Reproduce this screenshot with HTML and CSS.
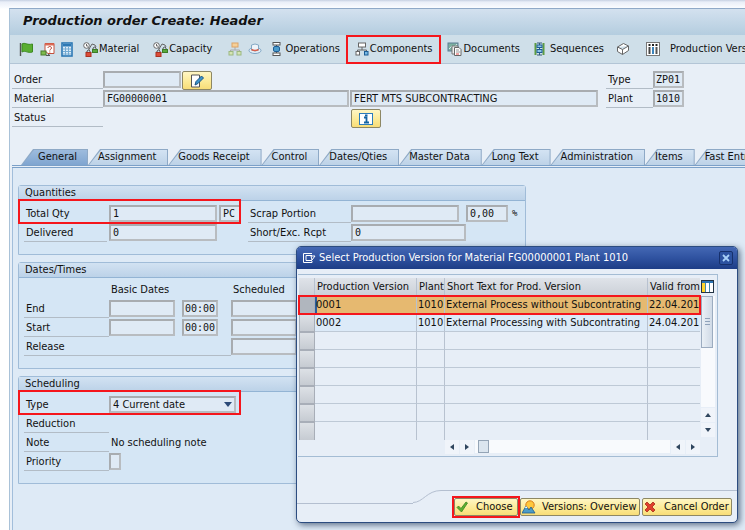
FILE: index.html
```html
<!DOCTYPE html>
<html lang="en">
<head>
    <meta charset="UTF-8">
    <title>Production order Create: Header</title>
    <link rel="stylesheet" href="styles.css">
</head>
<body>
<div class="window">
    <h1 class="title-bar">Production order Create: Header</h1>

    <div class="toolbar">
        <button class="tool" aria-label="Release order">
            <svg width="15" height="15" viewBox="0 0 15 15"><path d="M1.5 1v13" stroke="#555" stroke-width="1.4"/><path d="M3 2c3-2 5 1.500 10.500 0v8c-5 1.500-7-2-10.500 0z" fill="#5aae32" stroke="#3c8a20"/></svg>
        </button>
        <button class="tool" aria-label="Check material">
            <svg width="15" height="15" viewBox="0 0 15 15"><path d="M5 1.500h9v10H8L5 9z" fill="#fff" stroke="#c4503c"/><path d="M5 1.500h9v2H5z" fill="#dd6a55"/><path d="M8 6c0-2 3.500-2 3.500 0 0 1.200-1.700 1.200-1.700 2.500M9.800 9.500v1" fill="none" stroke="#b43a2a"/><rect x="1" y="9" width="5" height="4" fill="#7cba4c" stroke="#4a7a2c"/><path d="M6 13.500h4l-2-1.500" fill="none" stroke="#555"/></svg>
        </button>
        <button class="tool costs" aria-label="Costs">
            <svg width="12" height="15" viewBox="0 0 12 15"><rect x="1" y="1" width="10" height="13" fill="#dcecf8" stroke="#2c78b4" stroke-width="1.600"/><rect x="2" y="2" width="8" height="2.500" fill="#2c78b4"/><path d="M2 7h8M2 9.500h8M2 12h8M4.500 5v8M7.500 5v8" stroke="#74aad2"/></svg>
        </button>
        <button class="tool wide">
            <svg width="15" height="15" viewBox="0 0 15 15"><circle cx="3.500" cy="3.500" r="2.800" fill="#fff" stroke="#666"/><path d="M3.500 2v2H5M6 7l3-5 3 1 1 2M6 6v2" fill="none" stroke="#666"/><path d="M10 7V6q2-2 3 0v1" fill="none" stroke="#555"/><rect x="9.500" y="7.500" width="5" height="3" fill="#59a83c" stroke="#3c7c28"/><path d="M4 10V9q2-2 3 0v1" fill="none" stroke="#555"/><rect x="3" y="10.500" width="5" height="4" fill="#dc4c38" stroke="#ac3020"/></svg>
            Material
        </button>
        <button class="tool">
            <svg width="15" height="15" viewBox="0 0 15 15"><circle cx="3.500" cy="3.500" r="2.800" fill="#fff" stroke="#666"/><path d="M3.500 2v2H5M6 7l3-5 3 1 1 2M6 6v2" fill="none" stroke="#666"/><path d="M10 7V6q2-2 3 0v1" fill="none" stroke="#555"/><rect x="9.500" y="7.500" width="5" height="3" fill="#59a83c" stroke="#3c7c28"/><path d="M4 10V9q2-2 3 0v1" fill="none" stroke="#555"/><rect x="3" y="10.500" width="5" height="4" fill="#dc4c38" stroke="#ac3020"/></svg>
            Capacity
        </button>
        <span class="divider"></span>
        <button class="tool" aria-label="Hierarchy">
            <svg width="14" height="14" viewBox="0 0 14 14"><path d="M7 5v3M2.500 10V8h9v2" fill="none" stroke="#aaa"/><rect x="4" y="1" width="6" height="4" fill="#f6d098" stroke="#dca468"/><rect x="1" y="9.500" width="4" height="3.500" fill="#d4e4b4" stroke="#9cb880"/><rect x="9" y="9.500" width="4" height="3.500" fill="#d4e4b4" stroke="#9cb880"/></svg>
        </button>
        <button class="tool" aria-label="Header">
            <svg width="14" height="14" viewBox="0 0 14 14"><ellipse cx="7" cy="8.500" rx="6" ry="3" fill="#e4eef6" stroke="#7ca4c4"/><path d="M3.500 8V3q3.500-2 7 0v5q-3.500 2-7 0z" fill="#eef4fa" stroke="#84a8c4"/><path d="M3.500 7.500q3.500 2 7 0" fill="none" stroke="#d8604c" stroke-width="1.500"/></svg>
        </button>
        <button class="tool operations">
            <svg width="9" height="14" viewBox="0 0 9 14"><rect x="1" y=".5" width="7" height="2.500" fill="#fff" stroke="#555"/><rect x="1" y="11" width="7" height="2.500" fill="#fff" stroke="#555"/><path d="M4.500 3v8" stroke="#555"/><rect x="1.500" y="4.500" width="6" height="5" rx="1.500" fill="#4c9ccc" stroke="#1c5c94"/></svg>
            Operations
        </button>
        <button class="tool components marked">
            <svg width="14" height="14" viewBox="0 0 14 14"><path d="M7 5v3M2.500 10V8h9v2" fill="none" stroke="#666"/><rect x="3.500" y="1" width="7" height="4" fill="#fff" stroke="#666"/><rect x="1" y="9.500" width="3.500" height="3.500" fill="#fff" stroke="#666"/><rect x="9.500" y="9.500" width="3.500" height="3.500" fill="#78b8e4" stroke="#1c5c94"/></svg>
            Components
        </button>
        <button class="tool documents">
            <svg width="15" height="14" viewBox="0 0 15 14"><rect x="1" y="1" width="10" height="8" fill="#7cb0a0" stroke="#5c7c94"/><path d="M2 7l3-3 2 2 3-4" fill="none" stroke="#d8ecf0"/><path d="M5 4h6v8H5z" fill="#eee" stroke="#777"/><path d="M7.500 5.500H12l2 2v6H7.500z" fill="#fff" stroke="#666"/><path d="M9 8h3M9 10h4" stroke="#999"/><path d="M9 12h3" stroke="#d44"/></svg>
            Documents
        </button>
        <button class="tool sequences">
            <svg width="11" height="14" viewBox="0 0 11 14"><path d="M1.500 1v12M9.500 1v12" stroke="#5c9c44" stroke-width="2"/><path d="M3 1h5M3 13h5M5.500 1v12" stroke="#355a7a"/><rect x="3" y="3" width="5" height="2.500" fill="#8cc4e8" stroke="#1c5c94"/><rect x="3" y="7.500" width="5" height="3" fill="#8cc4e8" stroke="#1c5c94"/></svg>
            Sequences
        </button>
        <button class="tool" aria-label="Material component">
            <svg width="14" height="14" viewBox="0 0 14 14"><path d="M1.500 5l6-3.500L12.500 4v4.500l-6 4-5-3z M1.500 5l5 2.500 6-3.500M6.500 7.500v5" fill="#fff" stroke="#666" stroke-linejoin="round"/></svg>
        </button>
        <span class="divider"></span>
        <button class="tool versions">
            <svg width="14" height="14" viewBox="0 0 14 14"><rect x=".5" y=".5" width="13" height="13" fill="#fff" stroke="#777"/><path d="M3.500 2v2M7 2v2M10.500 2v2" stroke="#222" stroke-width="2"/><path d="M3.500 5v7" stroke="#444" stroke-width="2"/><path d="M7 5v7" stroke="#3c84bc" stroke-width="2"/><path d="M10.500 5v7" stroke="#555" stroke-width="2"/></svg>
            Production Version
        </button>
    </div>

    <form class="order-head">
        <div class="head-main">
            <div class="row">
                <label class="cap" for="order">Order</label>
                <input class="field order-no" id="order" type="text">
                <button class="yellow icon-only" type="button" aria-label="Edit order text">
                    <svg width="14" height="14" viewBox="0 0 14 14"><path d="M1.500 1h8v12h-8z" fill="#fff" stroke="#555"/><path d="M5 11l1-3.500L11.500 2l2 2L8 9.500z" fill="#3c94cc" stroke="#1c5484"/></svg>
                </button>
            </div>
            <div class="row">
                <label class="cap" for="material">Material</label>
                <input class="field material-no" id="material" type="text" value="FG00000001">
                <input class="field material-text" type="text" value="FERT MTS SUBCONTRACTING" aria-label="Material description">
            </div>
            <div class="row">
                <span class="cap">Status</span>
                <button class="yellow icon-only status-info" type="button" aria-label="Status information">
                    <svg width="14" height="12" viewBox="0 0 14 12"><rect x=".5" y=".5" width="13" height="11" fill="#fff" stroke="#2c7cbc"/><path d="M5 4.500h2.500V9M5 9.500h5" fill="none" stroke="#1464a4" stroke-width="1.800"/><rect x="6" y="1.500" width="2.500" height="2" fill="#1464a4"/></svg>
                </button>
            </div>
        </div>
        <div class="head-side">
            <div class="row">
                <label class="cap" for="orderType">Type</label>
                <input class="field" id="orderType" type="text" value="ZP01">
            </div>
            <div class="row">
                <label class="cap" for="plant">Plant</label>
                <input class="field" id="plant" type="text" value="1010">
            </div>
        </div>
    </form>

    <div class="tabs" role="tablist">
        <button class="tab active" role="tab">General</button>
        <button class="tab" role="tab">Assignment</button>
        <button class="tab" role="tab">Goods Receipt</button>
        <button class="tab" role="tab">Control</button>
        <button class="tab" role="tab">Dates/Qties</button>
        <button class="tab" role="tab">Master Data</button>
        <button class="tab" role="tab">Long Text</button>
        <button class="tab" role="tab">Administration</button>
        <button class="tab" role="tab">Items</button>
        <button class="tab" role="tab">Fast Entry</button>
    </div>

    <div class="panel">
        <section class="group">
            <h2>Quantities</h2>
            <div class="group-body">
                <div class="row">
                    <div class="pair marked mark-wide">
                        <label class="cap" for="totalQty">Total Qty</label>
                        <input class="field qty" id="totalQty" type="text" value="1">
                        <input class="field unit" type="text" value="PC" aria-label="Unit">
                    </div>
                    <label class="cap cap-second" for="scrap">Scrap Portion</label>
                    <input class="field qty" id="scrap" type="text">
                    <input class="field percent" type="text" value="0,00" aria-label="Scrap percent">
                    <span class="sign">%</span>
                </div>
                <div class="row">
                    <div class="pair">
                        <label class="cap" for="delivered">Delivered</label>
                        <input class="field qty" id="delivered" type="text" value="0">
                    </div>
                    <label class="cap cap-second" for="short">Short/Exc. Rcpt</label>
                    <input class="field short" id="short" type="text" value="0">
                </div>
            </div>
        </section>

        <section class="group">
            <h2>Dates/Times</h2>
            <div class="group-body dates">
                <span class="col-head basic">Basic Dates</span>
                <span class="col-head">Scheduled</span>
                <label class="cap" for="endDate">End</label>
                <input class="field" id="endDate" type="text">
                <input class="field time" type="text" value="00:00" aria-label="End time">
                <input class="field scheduled" type="text" aria-label="Scheduled end">
                <label class="cap" for="startDate">Start</label>
                <input class="field" id="startDate" type="text">
                <input class="field time" type="text" value="00:00" aria-label="Start time">
                <input class="field scheduled" type="text" aria-label="Scheduled start">
                <label class="cap release" for="releaseDate">Release</label>
                <input class="field scheduled" id="releaseDate" type="text">
            </div>
        </section>

        <section class="group">
            <h2>Scheduling</h2>
            <div class="group-body">
                <div class="row">
                    <div class="pair marked mark-wide">
                        <label class="cap" for="schedType">Type</label>
                        <span class="select-wrap">
                            <select class="field" id="schedType">
                                <option>4 Current date</option>
                            </select>
                        </span>
                    </div>
                </div>
                <div class="row"><span class="cap">Reduction</span></div>
                <div class="row"><span class="cap">Note</span><span class="note">No scheduling note</span></div>
                <div class="row">
                    <label class="cap" for="priority">Priority</label>
                    <input class="field priority" id="priority" type="text">
                </div>
            </div>
        </section>
    </div>
</div>

<div class="dialog" role="dialog" aria-labelledby="dialogTitle">
    <div class="dialog-title">
        <svg width="14" height="12" viewBox="0 0 14 12"><path d="M10 1.500H1.500v9H10V9M10 3.500H4v5h6M9 4h4L10 8z" fill="none" stroke="#fff"/></svg>
        <span id="dialogTitle">Select Production Version for Material FG00000001 Plant 1010</span>
        <button class="close" aria-label="Close">
            <svg width="8" height="8" viewBox="0 0 8 8"><path d="M1 1l6 6M7 1L1 7" stroke="#a8d0f8" stroke-width="1.800"/></svg>
        </button>
    </div>
    <div class="grid-box">
        <div class="grid-main">
            <table>
                <thead>
                    <tr><th class="sel"></th><th class="version">Production Version</th><th class="plant">Plant</th><th class="text">Short Text for Prod. Version</th><th>Valid from</th></tr>
                </thead>
                <tbody>
                    <tr class="picked"><td class="sel"></td><td class="cursor">0001</td><td>1010</td><td>External Process without Subcontrating</td><td>22.04.201</td></tr>
                    <tr class="filled"><td class="sel"></td><td>0002</td><td>1010</td><td>External Processing with Subcontrating</td><td>24.04.201</td></tr>
                    <tr><td class="sel"></td><td></td><td></td><td></td><td></td></tr>
                    <tr><td class="sel"></td><td></td><td></td><td></td><td></td></tr>
                    <tr><td class="sel"></td><td></td><td></td><td></td><td></td></tr>
                    <tr><td class="sel"></td><td></td><td></td><td></td><td></td></tr>
                    <tr><td class="sel"></td><td></td><td></td><td></td><td></td></tr>
                    <tr><td class="sel"></td><td></td><td></td><td></td><td></td></tr>
                </tbody>
            </table>
            <div class="hscroll">
                <button class="arrow left" aria-label="Scroll left"></button>
                <button class="arrow right" aria-label="Scroll right"></button>
                <div class="htrack"><span class="hthumb"></span></div>
                <button class="arrow left" aria-label="Page left"></button>
                <button class="arrow right" aria-label="Page right"></button>
            </div>
        </div>
        <div class="vscroll">
            <button class="config" aria-label="Table settings">
                <svg width="13" height="13" viewBox="0 0 13 13"><rect x=".5" y=".5" width="12" height="12" fill="#fff" stroke="#234"/><path d="M1 1h11v2H1z" fill="#2c74b4"/><path d="M1 3h3.500v9H1z" fill="#ffd42c"/><path d="M4.500 3v9M8.500 3v9" stroke="#48a"/></svg>
            </button>
            <div class="vtrack"><span class="vthumb"></span></div>
            <button class="arrow up" aria-label="Scroll up"></button>
            <button class="arrow down" aria-label="Scroll down"></button>
        </div>
    </div>
    <div class="dialog-foot">
        <svg class="curve" width="28" height="14" viewBox="0 0 28 14"><path d="M0 12.500C10 12.500 14 .5 28 .5" fill="none" stroke="#b4bfd0"/></svg>
        <div class="actions">
            <button class="yellow choose marked">
                <svg width="12" height="12" viewBox="0 0 12 12"><path d="M1 6.500l1.500-1.500L5 7.500 10 1l1.500 1L5.500 11z" fill="#5cb030" stroke="#3c8420" stroke-width=".8"/></svg>
                Choose
            </button>
            <button class="yellow overview">
                <svg width="14" height="14" viewBox="0 0 14 14"><circle cx="8" cy="5" r="4.200" fill="#ffc83c" stroke="#d87c1c"/><path d="M0 13l4-7 3 4 2-3 4 6z" fill="#4c9cc8" stroke="#1c5c8c" stroke-width=".8"/><path d="M3 8l1-2 1.500 2z" fill="#fff"/></svg>
                Versions: Overview
            </button>
            <button class="yellow cancel">
                <svg width="12" height="12" viewBox="0 0 12 12"><path d="M1 3l2-2 3 3 3-3 2 2-3 3 3 3-2 2-3-3-3 3-2-2 3-3z" fill="#e0402c" stroke="#a82818" stroke-width=".8"/></svg>
                Cancel Order
            </button>
        </div>
    </div>
</div>
</body>
</html>
```

FILE: styles.css
```css
* { box-sizing: border-box; }
html, body {
    height: 100%;
}
body {
    margin: 0;
    padding: 8px 0 0 9px;
    overflow: hidden;
    position: relative;
    background: linear-gradient(#c6d0e2 0, #e9eef8 2px, #fafcff 8px, #fff 9px);
    color: #111;
    font-family: "DejaVu Sans Condensed", "DejaVu Sans", sans-serif;
    font-stretch: condensed;
    font-size: 11px;
    line-height: 14px;
}
button, input, select {
    font: inherit;
    color: inherit;
    margin: 0;
}
button {
    padding: 0;
    border: none;
    background: none;
    cursor: pointer;
    white-space: nowrap;
}
svg {
    flex: none;
    display: block;
}
.window {
    display: flex;
    flex-direction: column;
    min-height: 100%;
    border-left: 1px solid #a9c2d8;
    border-top: 1px solid #8fa9c8;
    background: #e8eff7;
    overflow: hidden;
}

/* title and toolbar */
.title-bar {
    margin: 0;
    height: 26px;
    padding-left: 13px;
    background: linear-gradient(#d3e1ef, #b4cddf);
    font-family: "DejaVu Sans", sans-serif;
    font-stretch: normal;
    font-size: 13px;
    line-height: 24px;
    font-style: italic;
    font-weight: bold;
}
.toolbar {
    display: flex;
    align-items: center;
    height: 29px;
    padding-left: 9px;
    gap: 6px;
    background: #cfdfe9;
    border-bottom: 1px solid #b3c5d6;
    white-space: nowrap;
}
.tool {
    display: flex;
    align-items: center;
    gap: 1px;
    flex: none;
}
.costs {
    margin-right: 4px;
}
.tool.wide {
    margin-right: 8px;
}
.divider {
    width: 1px;
    height: 12px;
    margin: 0 2px;
    background: #a4bfe0;
}
.operations {
    gap: 4px;
    margin-left: 4px;
}
.sequences {
    gap: 5px;
    margin: 0 6px 0 4px;
}
.components {
    height: 29px;
    padding: 0 9px;
}
.documents {
    margin-right: 4px;
}
.versions {
    gap: 10px;
}

/* red highlight frames */
.marked {
    position: relative;
}
.marked::after {
    content: "";
    position: absolute;
    inset: 0;
    border: 2px solid #f5161c;
    pointer-events: none;
    z-index: 2;
}
.mark-wide::after {
    inset: -6px -2px -2px -6px;
}

/* fields */
.row {
    display: flex;
    height: 17px;
    margin-bottom: 2px;
}
.cap {
    flex: none;
    width: 85px;
    height: 18px;
    padding-left: 2px;
    line-height: 17px;
    border-bottom: 1px solid #b2bcc6;
    white-space: nowrap;
}
.field {
    flex: none;
    height: 17px;
    padding: 0 2px;
    border: 2px solid;
    border-color: #a8acb0 #b8bcc0 #b8bcc0 #a8acb0;
    border-radius: 0;
    background: #dfeaf5;
    font-family: "DejaVu Sans Mono", monospace;
    font-size: 10px;
    line-height: 13px;
    outline: none;
}
.yellow {
    display: flex;
    align-items: center;
    border: 1px solid #8d8764;
    border-radius: 2px;
    background: linear-gradient(#fff6c4, #fce993 60%, #f8dd78);
}
.icon-only {
    width: 30px;
    height: 19px;
    justify-content: center;
}

/* order header */
.order-head {
    display: flex;
    gap: 8px;
    padding: 7px 0 0 2px;
    height: 85px;
}
.order-head .cap {
    width: 91px;
}
.order-no {
    width: 78px;
    margin-right: 1px;
}
.material-no {
    width: 246px;
    margin-right: 1px;
    text-decoration: underline;
    text-underline-offset: 2px;
}
.material-text {
    width: 248px;
    font-family: inherit;
    font-size: 11px;
}
.status-info {
    margin-left: 248px;
}
.head-side .cap {
    width: 47px;
}
.head-side .field {
    width: 31px;
    padding: 0 0 0 1px;
}

/* tabs */
.tabs {
    display: flex;
    height: 19px;
    padding-left: 9px;
    margin-left: 2px;
    border-bottom: 3px double #7ba0c8;
}
.tab {
    position: relative;
    isolation: isolate;
    flex: none;
    height: 16px;
    padding: 0 12px 0 10px;
    line-height: 16px;
    background: #8ea9c6;
    clip-path: polygon(12px 0, 100% 0, 100% 100%, 0 100%);
}
.tab::before {
    content: "";
    position: absolute;
    inset: 1px 1px 0 1px;
    z-index: -1;
    background: linear-gradient(#d3e3f3, #bdd2e7);
    clip-path: polygon(12px 0, 100% 0, 100% 100%, 0 100%);
}
.tab.active {
    padding: 0 11px 0 17px;
}
.tab.active::before {
    background: linear-gradient(#9dbbdd, #7fa5d0);
}

/* tab content */
.panel {
    flex: 1;
    margin-left: 2px;
    padding: 17px 5px 0;
    border-left: 1px solid #a2bedb;
    background: #deeaf6;
}
.group {
    max-width: 508px;
    margin-bottom: 7px;
    border: 1px solid #a0bcd8;
    border-radius: 3px 3px 0 0;
    background: #d5e6f5;
}
.group h2 {
    margin: 0;
    height: 15px;
    padding-left: 6px;
    border-bottom: 1px solid #93b4d4;
    background: linear-gradient(#d2e2f2, #bcd2e8);
    font-size: 11px;
    font-weight: normal;
    line-height: 14px;
}
.group-body {
    padding: 4px 5px 11px;
}
.pair {
    display: flex;
    gap: 2px;
    width: 215px;
    margin-right: 9px;
}
.pair .cap {
    width: 83px;
}
.qty {
    width: 108px;
}
.unit {
    width: 22px;
}
.cap-second {
    width: 103px;
}
.percent {
    width: 42px;
    margin-left: 7px;
}
.short {
    width: 115px;
}
.sign {
    margin-left: 4px;
    font: 9px/17px "DejaVu Sans Mono", monospace;
}
.dates {
    display: grid;
    grid-template-columns: 85px 73px 49px 66px;
    grid-template-rows: 16px;
    grid-auto-rows: 17px;
    row-gap: 2px;
    padding-bottom: 13px;
}
.dates .field {
    width: 66px;
}
.dates .time {
    width: 36px;
    padding: 0 0 0 1px;
}
.basic {
    grid-column: 2 / 4;
}
.col-head {
    padding-left: 2px;
    line-height: 16px;
}
.release {
    grid-column: 1 / 4;
    width: auto;
}
.select-wrap {
    position: relative;
}
.select-wrap::after {
    content: "";
    position: absolute;
    right: 4px;
    top: 6px;
    border: 4px solid transparent;
    border-top: 5px solid #2c4a78;
    border-bottom: none;
    pointer-events: none;
}
.select-wrap .field {
    display: block;
    appearance: none;
    width: 127px;
    font-family: inherit;
    font-size: 11px;
}
.note {
    padding-left: 2px;
    line-height: 17px;
}
.priority {
    width: 12px;
}

/* version popup */
.dialog {
    position: absolute;
    top: 246px;
    right: 7px;
    width: 442px;
    border: 1px solid #2c4c80;
    border-radius: 5px;
    background: #e7eef7;
    box-shadow: 2px 2px 6px rgba(40, 60, 90, 0.7);
}
.dialog-title {
    display: flex;
    align-items: center;
    gap: 3px;
    height: 22px;
    padding: 0 4px 0 5px;
    border-radius: 4px 4px 0 0;
    background: linear-gradient(#4468b4, #2f52a0 50%, #1d3d86);
    color: #fff;
    white-space: nowrap;
}
.close {
    display: flex;
    align-items: center;
    justify-content: center;
    width: 14px;
    height: 14px;
    margin-left: auto;
    border: 1px solid #16306c;
    border-radius: 2px;
    background: #2c52a0;
}
.grid-box {
    display: flex;
    justify-content: space-between;
    margin: 5px 19px 0 1px;
    padding: 3px 2px 1px 1px;
    border: 1px solid #a4bcd4;
    border-left: none;
}
.grid-main {
    width: 401px;
}
table {
    width: 100%;
    table-layout: fixed;
    border-collapse: separate;
    border-spacing: 0;
}
th, td {
    height: 18px;
    padding: 0 0 0 1px;
    border-right: 1px solid #b8c2d0;
    border-bottom: 1px solid #bec9d6;
    font-weight: normal;
    text-align: left;
    line-height: 16px;
    white-space: nowrap;
}
th {
    padding-left: 2px;
    background: linear-gradient(#dfe3e9, #ccd1d8);
}
th:last-child, td:last-child {
    border-right: none;
}
tbody tr:last-child td {
    border-bottom: none;
}
th.sel { width: 16px; }
th.version { width: 102px; }
th.plant { width: 28px; }
th.text { width: 203px; }
td.sel {
    border: 1px solid #a8aeb8;
    background: linear-gradient(#dde1e6, #c6cbd2);
}
.filled td:not(.sel) {
    background: #dceaf8;
}
.picked {
    outline: 2px solid #f5161c;
    outline-offset: -1px;
}
.picked td:not(.sel) {
    background: #e6b970;
}
.picked td.sel {
    background: #b0b6be;
}
td.cursor {
    box-shadow: inset 2px 0 0 #2c5c9c;
}
.hscroll {
    display: flex;
    height: 15px;
    margin-left: 146px;
    gap: 1px;
}
.arrow {
    display: flex;
    align-items: center;
    justify-content: center;
    flex: none;
    width: 14px;
    height: 14px;
    background: #f0f4fa;
}
.arrow::before {
    content: "";
    border: 3px solid transparent;
}
.arrow.left::before { border-right: 4px solid #30465e; border-left: none; }
.arrow.right::before { border-left: 4px solid #30465e; border-right: none; }
.arrow.up::before { border-bottom: 4px solid #30465e; border-top: none; }
.arrow.down::before { border-top: 4px solid #30465e; border-bottom: none; }
.htrack {
    flex: 1;
    height: 13px;
    padding-left: 3px;
    background: #f8fafd;
}
.hthumb {
    display: block;
    width: 11px;
    height: 13px;
    border: 1px solid #94a4b6;
    background: #dbe5ef;
}
.vscroll {
    display: flex;
    flex-direction: column;
    width: 14px;
    padding-bottom: 18px;
    gap: 1px;
}
.config {
    height: 17px;
}
.vtrack {
    flex: 1;
    background: #f8fafd;
}
.vthumb {
    display: flex;
    width: 12px;
    height: 52px;
    border: 1px solid #9cacc0;
    background: linear-gradient(90deg, #eaf0f6, #d0dae6);
}
.vthumb::before {
    content: "";
    width: 5px;
    height: 8px;
    margin: auto;
    background: repeating-linear-gradient(#8fa2ba 0 1px, transparent 1px 3px);
}
.dialog-foot {
    display: grid;
    grid-template-columns: 116px 28px 1fr;
    margin-top: 33px;
}
.dialog-foot::before {
    content: "";
    height: 13px;
    border-bottom: 1px solid #b4bfd0;
}
.dialog-foot::after {
    content: "";
    grid-row: 1;
    grid-column: 3;
    border-top: 1px solid #b4bfd0;
}
.actions {
    grid-row: 2;
    grid-column: 1 / 4;
    display: flex;
    justify-content: flex-end;
    gap: 2px;
    padding: 0 5px 6px 0;
    margin-top: -6px;
}
.actions .yellow {
    height: 18px;
    padding: 0 4px 0 1px;
}
.actions .choose {
    width: 64px;
    gap: 8px;
}
.actions .overview {
    width: 120px;
    gap: 6px;
}
.actions .cancel {
    width: 90px;
    gap: 8px;
}
.choose::after {
    inset: -3px;
}
```
